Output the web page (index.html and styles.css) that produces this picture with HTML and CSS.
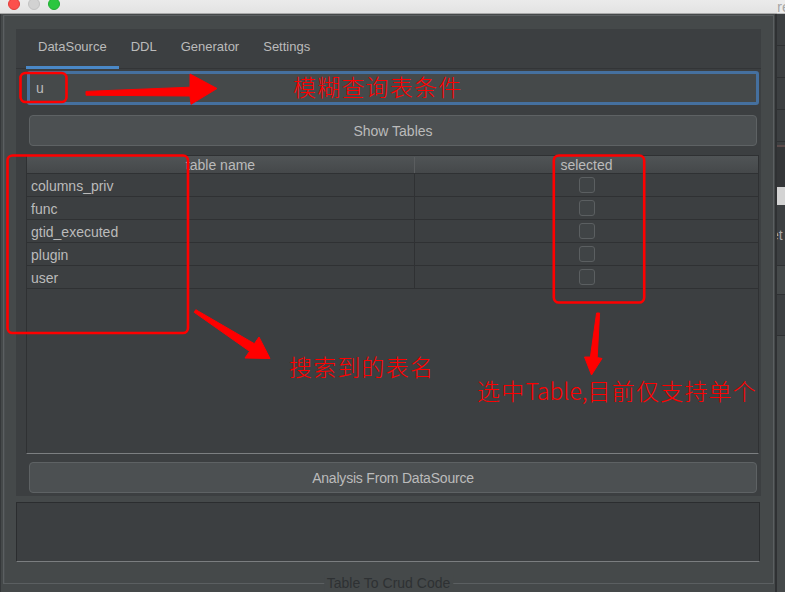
FILE: index.html
```html
<!DOCTYPE html>
<html>
<head>
<meta charset="utf-8">
<link rel="stylesheet" href="styles.css">
</head>
<body>
<div class="screen">
  <div class="window">
    <div class="titlebar">
      <span class="light red"></span><span class="light gray"></span><span class="light green"></span>
    </div>
    <div class="frame">
      <div class="group">
        <div class="tabs-panel">
          <div class="tab-strip">
            <div class="tab active">DataSource</div>
            <div class="tab">DDL</div>
            <div class="tab">Generator</div>
            <div class="tab">Settings</div>
          </div>
          <div class="tab-content">
            <div class="field">u</div>
            <div class="btn">Show Tables</div>
            <div class="scroll">
              <div class="grid head">
                <div class="th c1">table name</div>
                <div class="th">selected</div>
              </div>
              <div class="grid row"><div class="td c1">columns_priv</div><div class="td chk"><span class="box"></span></div></div>
              <div class="grid row"><div class="td c1">func</div><div class="td chk"><span class="box"></span></div></div>
              <div class="grid row"><div class="td c1">gtid_executed</div><div class="td chk"><span class="box"></span></div></div>
              <div class="grid row"><div class="td c1">plugin</div><div class="td chk"><span class="box"></span></div></div>
              <div class="grid row"><div class="td c1">user</div><div class="td chk"><span class="box"></span></div></div>
            </div>
            <div class="btn btn-analysis">Analysis From DataSource</div>
          </div>
        </div>
        <div class="textarea"></div>
        <span class="group-title">Table To Crud Code</span>
      </div>
    </div>
  </div>
  <div class="side">
    <div class="side-top">re</div>
    <div class="side-a"></div>
    <div class="side-b"></div>
    <div class="side-c"></div>
    <div class="side-d">et</div>
    <div class="side-e"></div>
    <div class="side-f"></div>
    <div class="side-g"></div>
  </div>

  <div class="notes">
    <svg class="marks" width="785" height="592" viewBox="0 0 785 592">
      <g fill="none" stroke="#ff0000" stroke-width="2.6">
        <rect x="20.5" y="73" width="46" height="29" rx="5"/>
        <rect x="7.5" y="155.5" width="180.5" height="177.5" rx="5"/>
        <rect x="553.8" y="155.5" width="90.4" height="147" rx="5"/>
      </g>
      <g fill="#ff0000" stroke="#ff0000" stroke-width="1" stroke-linejoin="round">
        <polygon points="86,91.4 190,87.2 190,74 217,88.5 191,104.3 190,96 86,95.2"/>
        <polygon points="195.8,309.7 254.4,343.7 259,337 270,358.5 245,358 249.6,351.3 194.2,312.3"/>
        <polygon points="596.6,313 599.6,313 597.2,357.5 602,358.5 591.5,375 584.5,357 590.4,357"/>
      </g>
    </svg>
    <div class="note n1">模糊查询表条件</div>
    <div class="note n2">搜索到的表名</div>
    <div class="note n3">选中<span class="latin">Table,</span>目前仅支持单个</div>
  </div>
</div>
</body>
</html>
```

FILE: styles.css
```css
* { box-sizing: border-box; }

html, body {
  margin: 0;
  padding: 0;
}

body {
  width: 785px;
  height: 592px;
  overflow: hidden;
  background: #3c3f41;
  font-family: "Liberation Sans", Arial, sans-serif;
  color: #bbbbbb;
}

.screen {
  position: relative;
  display: flex;
  width: 785px;
  height: 592px;
}

.window {
  width: 777px;
  display: flex;
  flex-direction: column;
}

.titlebar {
  height: 14px;
  flex: none;
  display: flex;
  align-items: flex-start;
  gap: 8px;
  padding-left: 8px;
  background: linear-gradient(#ebebeb, #e3e3e3);
  border-bottom: 1px solid #a9a9a9;
  overflow: hidden;
}

.light {
  width: 12px;
  height: 12px;
  margin-top: -2px;
  border-radius: 50%;
  flex: none;
}
.light.red { background: #fc4f4c; border: 1px solid #e23c39; }
.light.gray { background: #d2d2d2; border: 1px solid #c2c2c2; }
.light.green { background: #2bc63f; border: 1px solid #1fae31; }

.frame {
  flex: 1;
  display: flex;
  flex-direction: column;
  background: #45494a;
  border-left: 1px solid #35383a;
  border-right: 2px solid #2f3133;
  padding: 1px 1px 6px 2px;
}

.group {
  position: relative;
  flex: none;
  height: 569px;
  border: 1px solid #5b5f61;
  box-shadow: inset 1px 0 0 #4b4f51;
  display: flex;
  flex-direction: column;
  padding: 13px 12px 0 12px;
}

.tabs-panel {
  height: 467px;
  flex: none;
  display: flex;
  flex-direction: column;
  background: #3c3f41;
}

.tab-strip {
  height: 40px;
  flex: none;
  display: flex;
  padding-left: 10px;
  box-shadow: inset 0 -1px 0 #333537;
}

.tab {
  height: 40px;
  padding: 0 12px 3px 12px;
  display: flex;
  align-items: center;
  font-size: 13px;
  color: #bbbbbb;
  border-bottom: 3px solid transparent;
}
.tab.active { border-bottom-color: #4a88c7; }

.tab-content {
  flex: 1;
  display: flex;
  flex-direction: column;
  padding: 2px 2px 3px 10px;
}

.field {
  height: 34px;
  margin-left: 1px;
  border: 3px solid #45709f;
  border-radius: 3px;
  background: #45494a;
  padding-left: 6px;
  display: flex;
  align-items: center;
  font-size: 14px;
  color: #bbbbbb;
}

.btn {
  height: 31px;
  margin: 10px 2px 0 3px;
  background: #4c5052;
  border: 1px solid #5e6264;
  border-radius: 4px;
  display: flex;
  align-items: center;
  justify-content: center;
  font-size: 14px;
  color: #bbbbbb;
}

.btn-analysis { margin-top: 8px; letter-spacing: -0.2px; }

.scroll {
  height: 299px;
  margin-top: 9px;
  background: #3c3f41;
  border-top: 1px solid #2f3133;
  border-left: 1px solid #2f3133;
  border-right: 1px solid #2f3133;
  border-bottom: 1px solid #7c7f81;
}

.grid {
  display: grid;
  grid-template-columns: 388px 1fr;
}

.head {
  height: 18px;
  padding-top: 1px;
  background: linear-gradient(#505456, #45484a);
  border-bottom: 1px solid #2f3133;
}

.th {
  display: flex;
  align-items: center;
  justify-content: center;
  font-size: 14px;
  color: #bbbbbb;
}
.th.c1 { border-right: 1px solid #5a5d5f; }

.row { height: 23px; }

.td {
  border-bottom: 1px solid #2f3133;
  display: flex;
  align-items: center;
  padding-top: 1px;
  font-size: 14px;
  color: #bbbbbb;
}
.td.c1 {
  padding-left: 4px;
  border-right: 1px solid #2f3133;
}
.td.chk { justify-content: center; padding-left: 1px; padding-top: 0; }

.box {
  width: 16px;
  height: 16px;
  border: 1px solid #5b5f61;
  border-radius: 3px;
  background: #404446;
}

.textarea {
  height: 60px;
  flex: none;
  margin: 6px 1px 0 0;
  background: #3c3f41;
  border: 1px solid #2b2d2f;
  border-bottom: 1px solid #7b7e80;
}

.group-title {
  position: absolute;
  left: 50%;
  bottom: -9px;
  transform: translateX(-50%);
  padding: 0 3px;
  background: #45494a;
  font-size: 14px;
  line-height: 17px;
  color: #2e3133;
  white-space: nowrap;
}

/* right strip of another window */
.side {
  width: 8px;
  display: flex;
  flex-direction: column;
  background: #3c3f41;
  overflow: hidden;
}
.side-top {
  height: 14px;
  background: #ececec;
  border-bottom: 1px solid #bdbdbd;
  font-size: 15px;
  line-height: 14px;
  color: #a8a8a8;
  white-space: nowrap;
}
.side-a {
  height: 131px;
  background: #3c3f41;
  background-image: repeating-linear-gradient(#3c3f41 0, #3c3f41 31px, #2f3133 31px, #2f3133 32px);
}
.side-b { height: 42px; background: #343638; border-top: 2px solid #5a4a4a; }
.side-c { height: 18px; background: #d3d3d3; }
.side-d {
  height: 60px;
  background: #3c3f41;
  font-size: 14px;
  line-height: 60px;
  color: #aaaaaa;
  margin-left: -6px;
  white-space: nowrap;
}
.side-e { height: 30px; background: #45494a; border-top: 1px solid #2f3133; border-bottom: 1px solid #2f3133; }
.side-f { height: 40px; background: #3c3f41; }
.side-g { flex: 1; background: #45494a; border-top: 1px solid #2f3133; }

/* annotations */
.notes {
  position: absolute;
  left: 0;
  top: 0;
  width: 785px;
  height: 592px;
  pointer-events: none;
}
.marks {
  position: absolute;
  left: 0;
  top: 0;
}
.note {
  position: absolute;
  font-family: "Noto Sans CJK SC", "Noto Sans", sans-serif;
  font-weight: 300;
  font-size: 23px;
  line-height: 23px;
  letter-spacing: 1.2px;
  color: #ff0000;
  white-space: nowrap;
}
.n1 { left: 293px; top: 75px; }
.n2 { left: 289px; top: 355px; }
.n3 { left: 477px; top: 379px; }
.latin { letter-spacing: 0; }
```
